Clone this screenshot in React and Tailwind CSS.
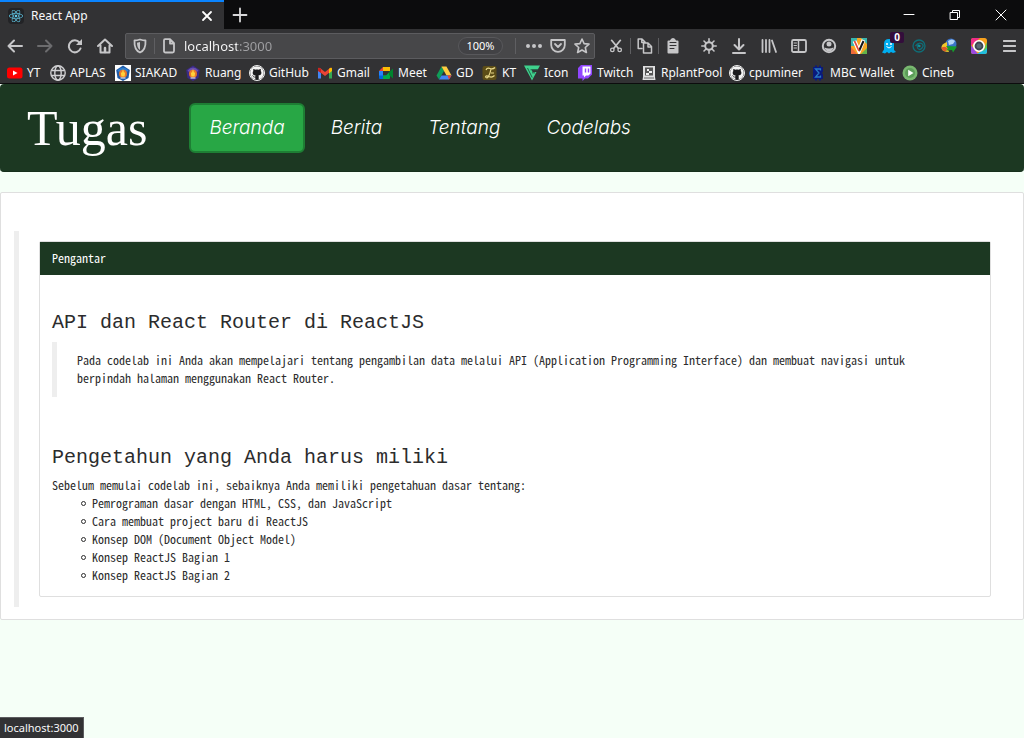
import React from 'react';
import { FaGithub, FaReact } from 'react-icons/fa';

const S = ({ children, className = 'w-4 h-4', fill = 'none', sw = 2 }) => (
  <svg viewBox="0 0 16 16" className={className} fill={fill} stroke="currentColor" strokeWidth={sw} strokeLinecap="round" strokeLinejoin="round" aria-hidden="true">
    {children}
  </svg>
);

const P = ({ children }) => (
  <svg viewBox="0 0 16 16" className="w-4 h-4 shrink-0" aria-hidden="true">{children}</svg>
);

const Crest = ({ boxed }) => (
  <P>
    {boxed && <rect width="16" height="16" fill="#fff" />}
    <path d="M8 .5l6.800 4.500-1.300 8L8 16l-5.500-3L1.200 5z" fill={boxed ? '#1e5aa8' : '#3b2a86'} />
    <path d="M2.500 5.500q5.500-6 11 0L12 7Q8 3 4 7z" fill={boxed ? '#2f7fd0' : '#6a4fb0'} />
    <circle cx="8" cy="8.800" r="4" fill="#e8772a" />
    <path d="M8 4l1 3.500h1.200l-.6 4H6.400l-.6-4H7z" fill="#ffd23c" />
    <path d="M5.500 13h5" stroke="#d9dff0" strokeWidth="1.200" />
  </P>
);

const Github = () => (
  <span className="w-4 h-4 shrink-0 rounded-full border border-[#f4f4f4] bg-[#1b1b1d] flex items-center justify-center">
    <FaGithub className="w-3.5 h-3.5 shrink-0 text-[#f4f4f4]" />
  </span>
);

const bookmarks = [
  {
    label: 'YT', width: 'w-[43px]',
    icon: <P><rect x="0" y="2.500" width="15.500" height="11" rx="2.500" fill="#f00" /><path d="M6 5.500v5l4.500-2.500z" fill="#fff" /></P>,
  },
  {
    label: 'APLAS', width: 'w-[65px]',
    icon: <P><g fill="none" stroke="#d0d0d2" strokeWidth="1.400"><circle cx="8" cy="8" r="7.200" /><ellipse cx="8" cy="8" rx="3.200" ry="7.200" /><path d="M1.800 5.500h12.400M1.800 10.500h12.400" /></g></P>,
  },
  { label: 'SIAKAD', width: 'w-[70px]', icon: <Crest boxed /> },
  { label: 'Ruang', width: 'w-[64px]', icon: <Crest /> },
  { label: 'GitHub', width: 'w-[68px]', icon: <Github /> },
  {
    label: 'Gmail', width: 'w-[61px]',
    icon: (
      <P>
        <path d="M1 4v9.500h3V7z" fill="#4285f4" /><path d="M15 4v9.500h-3V7z" fill="#34a853" />
        <path d="M1 4q0-2 2-1l5 4 5-4q2-1 2 1v1.500L8 11 1 5.500z" fill="#ea4335" />
        <path d="M12 4l1-1q2-1 2 1v2l-3 2.500z" fill="#fbbc04" /><path d="M1 4q0-1.500 1.500-1L4 4v4L1 6z" fill="#c5221f" />
      </P>
    ),
  },
  {
    label: 'Meet', width: 'w-[58px]',
    icon: (
      <P>
        <path d="M5 2h7v4H5z" fill="#fbbc04" /><path d="M5 2v4H1z" fill="#ea4335" />
        <path d="M1 6h4v5H1z" fill="#2684fc" /><path d="M1 10.500h8v3.500H2q-1 0-1-1z" fill="#0066da" />
        <path d="M8 10.500l4-4V13q0 1-1 1H5v-3.500z" fill="#00ac47" /><path d="M11 7l4-3.500v10L11 10z" fill="#00832d" />
      </P>
    ),
  },
  {
    label: 'GD', width: 'w-[46px]',
    icon: <P><path d="M5.500 1.500L.5 10.500 3 14.500 8 6z" fill="#0f9d58" /><path d="M5.500 1.500h5l5 9h-5z" fill="#ffcd40" /><path d="M5.500 10.500h10L13 14.500H3z" fill="#4285f4" /><path d="M13 14.500l2.500-4h-4z" fill="#ea4335" /></P>,
  },
  {
    label: 'KT', width: 'w-[42px]',
    icon: <P><rect x=".5" y="1" width="14" height="14" rx="2" fill="#5c4d17" /><path d="M4 5q1-2.500 4-1.500t5-1M9 4Q8 9 6.500 11.500T3.500 12Q4 10 7 11.500t5.500-1M9 8h3" fill="none" stroke="#e9d98a" strokeWidth="1.200" /></P>,
  },
  {
    label: 'Icon', width: 'w-[53px]',
    icon: <P><path d="M0 .5h16l-2.200 4H7.500L8.500 7h4L8 15.500z" fill="#3fd28d" /><path d="M3.500 3l4.700 9.500M6.500 4.800h7.500M8 7.800h3" stroke="#245f49" strokeWidth="1" /></P>,
  },
  {
    label: 'Twitch', width: 'w-[64px]',
    icon: <P><path d="M4 0H15V9.500l-4 4H8L5.500 16v-2.500H1V3z" fill="#9146ff" /><path d="M5.500 1.500h8v7l-2 2H9l-2 2v-2H5.500z" fill="#fff" /><path d="M8.500 3.500v4M11.500 3.500v4" stroke="#9146ff" strokeWidth="1.400" /></P>,
  },
  {
    label: 'RplantPool', width: 'w-[88px]',
    icon: <P><path d="M2 1h12v11l.5 3h-13l.5-3z" fill="#dededf" /><rect x="4" y="2.500" width="8" height="8" fill="#555" /><path d="M6 4h2v2H6zM8 6h3v2H8zM5 8h3v2H5z" fill="#eee" /><path d="M3 13h10" stroke="#666" /></P>,
  },
  { label: 'cpuminer', width: 'w-[81px]', icon: <Github /> },
  {
    label: 'MBC Wallet', width: 'w-[92px]',
    icon: <P><path d="M3 2h2V.5h2V2h2V.5h2V2h2v4.500L12 8l1 1.500V14h-2v1.500H9V14H7v1.500H5V14H3z" fill="#0a1a7c" /><path d="M10.500 5.500V4H5.500L9 8l-3.500 4h5v-1.500" fill="none" stroke="#2879c4" strokeWidth="1.300" /></P>,
  },
  {
    label: 'Cineb', width: 'w-[60px]',
    icon: <P><circle cx="8" cy="8" r="7.500" fill="#79b870" /><circle cx="8" cy="8" r="5" fill="#5c9d59" /><path d="M6.200 4.800v6.400L11.500 8z" fill="#fff" /></P>,
  },
];

const ToolButton = ({ label, width = 'w-[30px]', children }) => (
  <button type="button" aria-label={label} className={`${width} h-8 shrink-0 flex items-center justify-center relative`}>{children}</button>
);

const Rule = () => <span className="w-px h-4 bg-[#5f5f62] shrink-0" />;

const TitleBar = () => (
  <div className="flex h-[29px] bg-[#0c0c0d]">
    <div className="w-56 flex items-center bg-[#323234] border-t-2 border-[#0a84ff] pl-2 pr-2">
      <span className="w-4 h-4 rounded-sm bg-[#222326] flex items-center justify-center">
        <FaReact className="w-3.5 h-3.5 text-[#61c9e8]" />
      </span>
      <span className="flex-1 pl-[7px] text-xs text-[#f9f9fa]">React App</span>
      <button type="button" aria-label="Close tab" className="w-[18px] h-[18px] flex items-center justify-center text-white">
        <S className="w-4 h-4" sw={1.800}><path d="M4 4l8 8M12 4l-8 8" /></S>
      </button>
    </div>
    <button type="button" aria-label="New tab" className="w-8 flex items-center justify-center text-[#d8d8d9]">
      <S sw={1.800}><path d="M8 1.500v13M1.500 8h13" /></S>
    </button>
    <div className="flex-1" />
    <button type="button" aria-label="Minimize" className="w-[46px] flex items-center justify-center text-white"><S sw={1}><path d="M3 7.500h10" /></S></button>
    <button type="button" aria-label="Restore" className="w-[46px] flex items-center justify-center text-white"><S sw={1}><path d="M3.500 5.500h7v7h-7zM5.500 5.500v-2h7v7h-2" strokeLinejoin="miter" /></S></button>
    <button type="button" aria-label="Close" className="w-[46px] flex items-center justify-center text-white"><S sw={1}><path d="M3 3l10 10M13 3L3 13" /></S></button>
  </div>
);

const ToolBar = () => (
  <div className="flex items-center h-[33px] text-[#c6c6c8]">
    <ToolButton label="Back"><S><path d="M15 8H1.500M7 2.500L1.500 8 7 13.500" /></S></ToolButton>
    <span className="flex text-[#6c6c6e]"><ToolButton label="Forward"><S><path d="M1 8h13.500M9 2.500L14.500 8 9 13.500" /></S></ToolButton></span>
    <ToolButton label="Reload"><S><path d="M13.500 10.500A6 6 0 1 1 12.500 4.500" /><path d="M15 1v6H9z" fill="currentColor" stroke="none" /></S></ToolButton>
    <ToolButton label="Home"><S><path d="M1 8l7-6.500L15 8M3.500 7.500V14.500h9V7.500" /><path d="M8 14v-4" strokeWidth="2.500" /></S></ToolButton>
    <div className="flex-1 min-w-0 flex items-center h-[26px] ml-[5px] mr-1.5 bg-[#474749] border border-[#5c5c5f] rounded-xs">
      <ToolButton label="Site protection" width="w-7"><S sw={1.800}><path d="M8 1.500q3 1 5.500 1Q14 12 8 14.500 2 12 2.500 2.500q2.500 0 5.500-1z" /><path d="M8 4v8Q5 10.500 5 4.800z" fill="currentColor" stroke="none" /></S></ToolButton>
      <Rule />
      <ToolButton label="Site information" width="w-7"><S sw={1.800}><path d="M4 1.200h5l4 4V13q0 1.500-1.500 1.500h-7Q3 14.500 3 13V2.500Q3 1.200 4 1.200zM9 1.500v4h4" /></S></ToolButton>
      <input
        aria-label="Address"
        defaultValue="localhost:3000"
        className="flex-1 min-w-0 h-6 pl-px text-[13px] text-transparent bg-clip-text bg-[linear-gradient(to_right,#f9f9fa_54px,#a0a0a3_54px)] outline-none"
      />
      <button type="button" className="w-[45px] h-[18px] rounded-full border border-[#58585b] bg-[#424245] text-[11px] leading-4 text-white mr-3">100%</button>
      <Rule />
      <span className="w-1.5" />
      <ToolButton label="Page actions" width="w-6"><S fill="currentColor" className="w-[18px] h-4"><circle cx="2" cy="8" r="1" /><circle cx="8" cy="8" r="1" /><circle cx="14" cy="8" r="1" /></S></ToolButton>
      <ToolButton label="Save to Pocket" width="w-6"><S sw={1.800}><path d="M1.200 2h13.600v5a6.800 6.800 0 0 1-13.600 0zM5 6l3 3 3-3" /></S></ToolButton>
      <ToolButton label="Bookmark" width="w-6"><S sw={1.600}><path d="M8 1l2.100 4.600 4.900.5-3.700 3.400 1.100 5L8 12l-4.400 2.500 1.100-5L1 6.100l4.900-.5z" /></S></ToolButton>
    </div>
    <ToolButton label="Cut" width="w-[29px]"><S sw={1.500} className="w-3.5 h-4"><path d="M3 1.500l7.500 9M13 1.500l-7.500 9" strokeWidth="2" /><circle cx="3.800" cy="12.500" r="2" /><circle cx="12.200" cy="12.500" r="2" /></S></ToolButton>
    <Rule />
    <ToolButton label="Copy" width="w-[27px]"><S sw={1.500}><path d="M5 10.500H1.200V1H5l3 3v1M4.800 1.500V4.500H7.500" /><path d="M6.500 5h4.500l3.500 3.500V15h-8zM11 5.500v3.500h3" fill="#323234" /></S></ToolButton>
    <Rule />
    <ToolButton label="Paste" width="w-[27px]"><S sw={1}><path d="M3.500 3.500h9v11h-9zM6 2.500Q8-.5 10 2.500z" fill="currentColor" strokeWidth="2" /><path d="M5 4.500h6M5 7.500h6M5 10.500h4" stroke="#323234" /></S></ToolButton>
    <span className="w-2" />
    <ToolButton label="Settings"><S sw={1.600}><circle cx="8" cy="8" r="3.800" strokeWidth="2" /><path d="M8 .8v3M8 12.200v3M.8 8h3M12.200 8h3M3 3l2 2M11 11l2 2M13 3l-2 2M5 11l-2 2" /></S></ToolButton>
    <ToolButton label="Downloads"><S><path d="M8 1v10M3.500 7L8 11.500 12.500 7M2 15h12" /></S></ToolButton>
    <ToolButton label="Library"><S sw={1.800}><path d="M1.500 2v12M5 2v12M8.500 2v12M11 2.500l4 11.500" /></S></ToolButton>
    <ToolButton label="Sidebars"><S sw={1.800}><rect x="1" y="2" width="14" height="12" rx="1.500" /><path d="M7.500 2v12" strokeWidth="1.500" /><path d="M3 5h2.500M3 7.500h2.500M3 10h2.500" strokeWidth="1" /></S></ToolButton>
    <ToolButton label="Account"><S><circle cx="8" cy="8" r="6.200" /><circle cx="8" cy="6" r="2.500" fill="currentColor" stroke="none" /><path d="M3.500 9.500q4.500 2 9 0-1 4-4.500 4t-4.500-4z" fill="currentColor" stroke="none" /></S></ToolButton>
    <ToolButton label="Video tools"><P><rect width="16" height="16" rx="1" fill="#f6a623" /><path d="M0 0h6v8H0z" fill="#38b5ae" /><path d="M0 9l6 7H0z" fill="#ee6a3b" /><path d="M10 0h6v6z" fill="#38b5ae" /><path d="M10 16l6-6v6z" fill="#63b34a" /><path d="M3.500 3l4.500 10 4.500-11" fill="none" stroke="#fff" strokeWidth="4" /><path d="M8 13l4.500-10" stroke="#161616" strokeWidth="2" /><path d="M3.500 3L8 13" stroke="#de4a3c" strokeWidth="1.800" /></P></ToolButton>
    <ToolButton label="Tracker blocker">
      <P><path d="M3 6q0-5 5-5t5 5v6l2 2-3 1-2-1-2 1.500L6 14l-2 1.500-3-1 2-3z" fill="#00aef0" /><circle cx="6" cy="6" r="1" fill="#fff" /><circle cx="10" cy="6" r="1" fill="#fff" /><path d="M5.500 8.500q2.500 3 5 0" fill="none" stroke="#fff" /></P>
      <span className="absolute top-0.5 right-0 w-3.5 h-[11px] rounded-xs bg-[#330d3b] text-white text-[10px] leading-[11px] font-bold">0</span>
    </ToolButton>
    <ToolButton label="Privacy"><P><g fill="none" stroke="#0f6e78" strokeWidth="1.300"><circle cx="8" cy="8" r="6" /><path d="M4.500 8q3-4 6-2.500t.5 4.500-4.500 0Q6 7.500 8 7" /></g><circle cx="8.300" cy="8" r="1.300" fill="#12909a" /></P></ToolButton>
    <ToolButton label="Download manager"><P><circle cx="10" cy="6" r="5.500" fill="#3a73c8" /><path d="M7 3q4-3 7 0l-2 3-4 1z" fill="#b4d5f5" /><path d="M6 4Q0 6 .5 10T8 14L6 9z" fill="#f0c72b" /><path d="M.5 9.500q4-2 6 1l-2 3Q.5 13 .5 9.500z" fill="#dc5a2c" /><path d="M5 8l11 .5-4 6-1-2.500-6 .5 2-2z" fill="#169c2d" /></P></ToolButton>
    <ToolButton label="Screenshot"><P>
      <rect width="16" height="16" rx="2.500" fill="#f8a11c" /><path d="M0 8V2q0-2 2-2h7z" fill="#ee2c87" /><path d="M0 7l7 9H2q-2 0-2-2z" fill="#9b4ae0" /><path d="M6 16l10-7v5q0 2-2 2z" fill="#20bde0" /><path d="M16 4v6l-4 4z" fill="#59c94b" />
      <circle cx="8" cy="8" r="5.200" fill="#3b4650" stroke="#fff" strokeWidth="1.600" /><circle cx="8" cy="8" r="2.500" fill="#596773" /></P></ToolButton>
    <ToolButton label="Menu"><S className="w-4 h-4"><path d="M3 3h11M3 8h11M3 13h11" strokeLinecap="square" strokeWidth="1.800" /></S></ToolButton>
  </div>
);

const Bookmarks = () => (
  <nav aria-label="Bookmarks" className="flex items-center h-[22px] pl-[7px] border-b border-[#0c0c0d] text-xs text-[#f9f9fa]">
    {bookmarks.map((b) => (
      <a key={b.label} href="#" className={`${b.width} shrink-0 flex items-center gap-1 whitespace-nowrap`}>
        {b.icon}
        <span>{b.label}</span>
      </a>
    ))}
  </nav>
);

const links = ['Beranda', 'Berita', 'Tentang', 'Codelabs'];

const SiteNav = () => (
  <nav className="flex items-center h-22 pl-[27px] gap-[42px] bg-[#1c3822] rounded-sm border-b border-[#17301c]">
    <a href="#" className="font-['Liberation_Serif',serif] text-[50px] leading-none text-white">Tugas</a>
    <ul className="flex gap-1.5 font-['Inter',sans-serif] font-light italic text-[19px] text-white">
      {links.map((l, i) => (
        <li key={l}>
          <a href="#" className={`flex items-center h-[50px] px-[18px] pt-0.5 rounded-md border-2 ${i === 0 ? 'bg-[#28a745] border-[#1e7e34]' : 'border-transparent'}`}>{l}</a>
        </li>
      ))}
    </ul>
  </nav>
);

const topics = [
  'Pemrograman dasar dengan HTML, CSS, dan JavaScript',
  'Cara membuat project baru di ReactJS',
  'Konsep DOM (Document Object Model)',
  'Konsep ReactJS Bagian 1',
  'Konsep ReactJS Bagian 2',
];

export default function App() {
  return (
    <div className="min-h-screen flex flex-col bg-[#f5fff7] font-['Noto_Sans','Open_Sans',sans-serif] relative">
      <header className="bg-[#323234]">
        <TitleBar />
        <ToolBar />
        <Bookmarks />
      </header>
      <SiteNav />
      <main className="mt-5 border border-[#dfdfdf] rounded-xs bg-white pt-[38px] pb-3 pl-[13px] pr-8 font-['Noto_Sans_Mono_CJK_SC','Liberation_Mono',monospace] text-xs leading-[18px] text-[#2c2c2d]">
        <div className="border-l-[5px] border-[#eeeeee] py-2.5 pl-5">
          <article className="border border-[#dfdfdf] rounded-xs">
            <header className="h-[33px] flex items-center px-3 pb-0.5 bg-[#1c3822] text-white">Pengantar</header>
            <div className="px-3 pt-[35px] pb-3">
              <h2 className="font-['Liberation_Mono',monospace] text-xl leading-[26px] mb-1.5">API dan React Router di ReactJS</h2>
              <blockquote className="border-l-[5px] border-[#eeeeee] pt-[9px] pb-2.5 pl-5 pr-10">
                Pada codelab ini Anda akan mempelajari tentang pengambilan data melalui API (Application Programming Interface) dan membuat navigasi untuk berpindah halaman menggunakan React Router.
              </blockquote>
              <h2 className="font-['Liberation_Mono',monospace] text-xl leading-[26px] mt-12 mb-[5px]">Pengetahun yang Anda harus miliki</h2>
              <p>Sebelum memulai codelab ini, sebaiknya Anda memiliki pengetahuan dasar tentang:</p>
              <ul className="pl-[29px]">
                {topics.map((t) => (
                  <li key={t} className="flex items-center gap-1.5 before:w-[5px] before:h-[5px] before:rounded-full before:border before:border-[#2c2c2d]">{t}</li>
                ))}
              </ul>
            </div>
          </article>
        </div>
      </main>
      <div role="status" className="absolute bottom-0 left-0 h-[21px] px-1 flex items-center bg-[#323234] border-t border-r border-[#5c5c5f] text-[11px] text-[#f9f9fa]">localhost:3000</div>
    </div>
  );
}
